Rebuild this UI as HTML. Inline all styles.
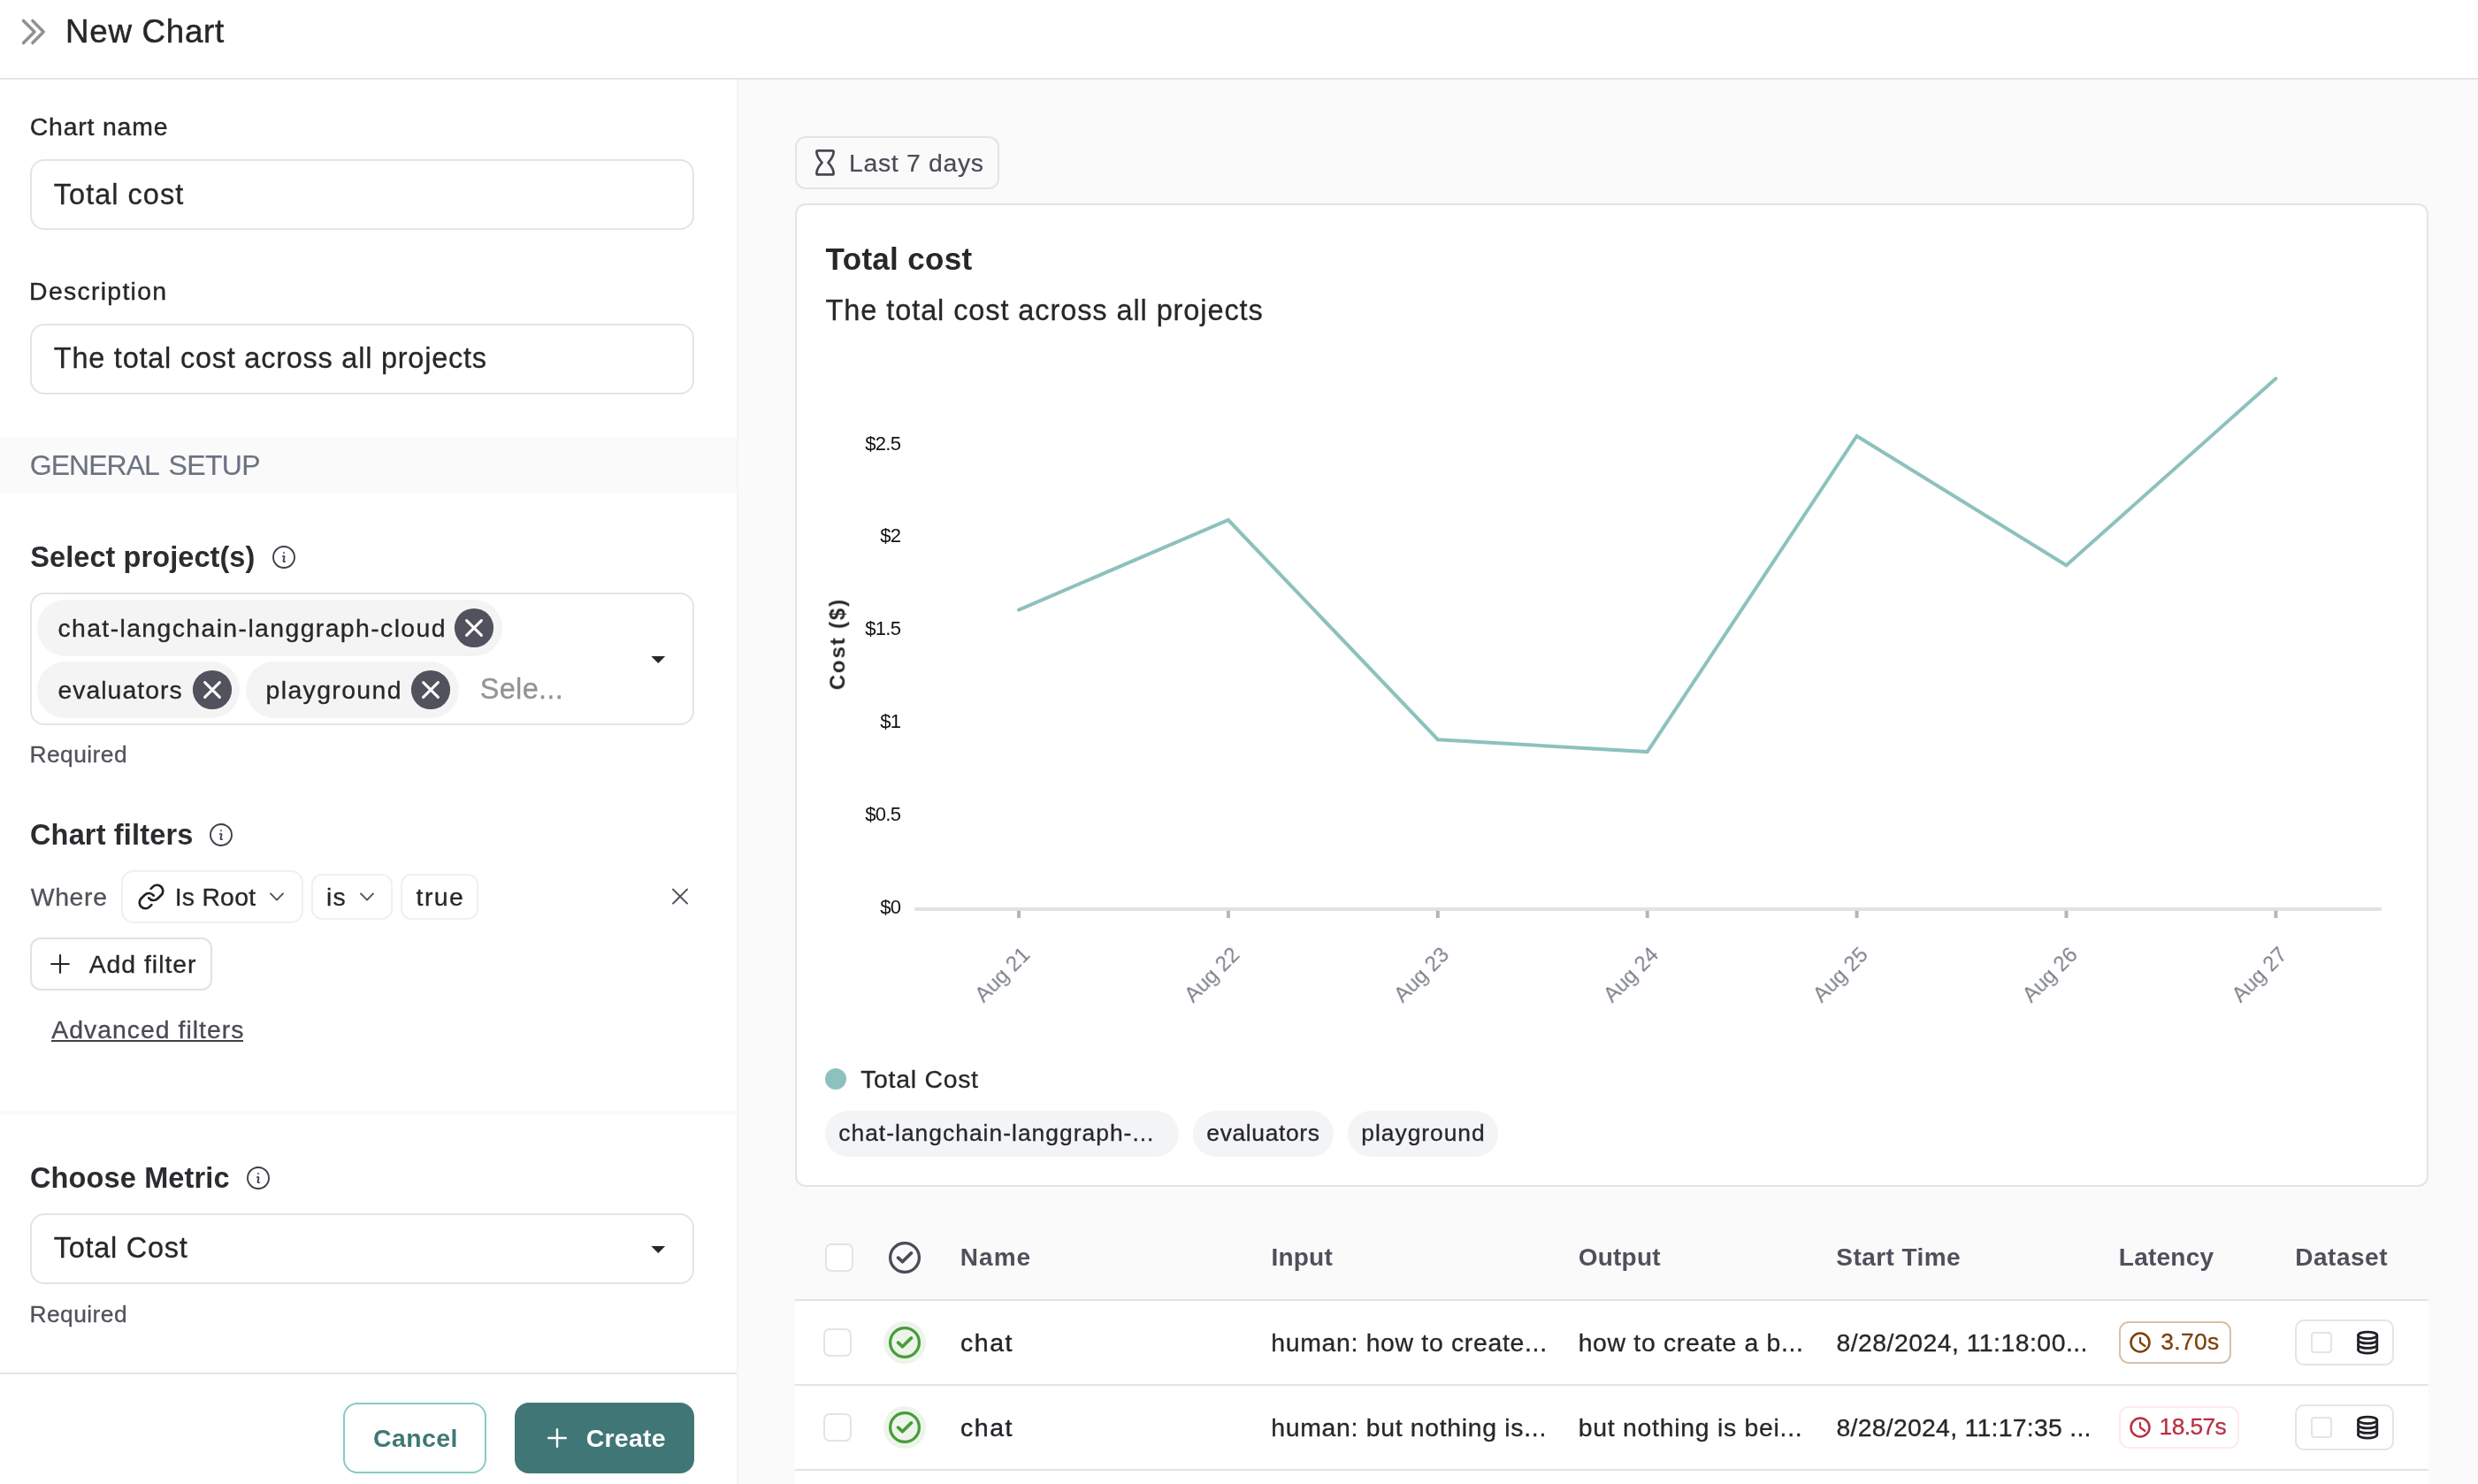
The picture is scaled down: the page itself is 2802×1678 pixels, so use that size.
<!DOCTYPE html>
<html><head><meta charset="utf-8"><title>New Chart</title>
<style>
html,body{margin:0;padding:0;background:#fff;}
body{width:2802px;height:1678px;position:relative;font-family:"Liberation Sans",sans-serif;}
.t{position:absolute;white-space:nowrap;line-height:1;font-weight:400;}
.b{position:absolute;box-sizing:border-box;}
#root{position:absolute;left:0;top:0;width:2802px;height:1678px;overflow:hidden;will-change:transform;}
</style></head><body><div id="root">
<div class="b" style="left:0px;top:88px;width:2802px;height:2px;background:#e4e4e7;"></div>
<div class="b" style="left:835px;top:90px;width:1967px;height:1588px;background:#fafafa;"></div>
<div class="b" style="left:833px;top:90px;width:2px;height:1588px;background:#f4f4f5;"></div>
<svg class="b" style="left:20px;top:16px;" width="40" height="40" viewBox="0 0 40 40" fill="none"><path d="M6.5 7.45 L19 20 L6.5 32.55 M16.9 7.45 L29.2 20 L16.9 32.55" stroke="#919195" stroke-width="3.5" stroke-linecap="round" stroke-linejoin="round"/></svg>
<span class="t" style="left:74.10px;top:17.93px;font-size:36.7px;color:#27272a;letter-spacing:0.717px;-webkit-text-stroke:0.5px #27272a;">New Chart</span>
<span class="t" style="left:33.76px;top:129.06px;font-size:28.4px;color:#27272a;letter-spacing:0.819px;-webkit-text-stroke:0.4px #27272a;">Chart name</span>
<div class="b" style="left:34px;top:180px;width:751px;height:80px;background:#fff;border:2px solid #e4e4e7;border-radius:16px;"></div>
<span class="t" style="left:60.81px;top:203.89px;font-size:32.5px;color:#27272a;letter-spacing:1.014px;-webkit-text-stroke:0.3px #27272a;">Total cost</span>
<span class="t" style="left:33.09px;top:314.86px;font-size:28.4px;color:#27272a;letter-spacing:1.299px;-webkit-text-stroke:0.4px #27272a;">Description</span>
<div class="b" style="left:34px;top:366px;width:751px;height:80px;background:#fff;border:2px solid #e4e4e7;border-radius:16px;"></div>
<span class="t" style="left:60.81px;top:389.49px;font-size:32.5px;color:#27272a;letter-spacing:0.759px;-webkit-text-stroke:0.3px #27272a;">The total cost across all projects</span>
<div class="b" style="left:0px;top:494px;width:833px;height:64px;background:#fafafa;"></div>
<span class="t" style="left:33.74px;top:510.01px;font-size:32.0px;color:#6b7280;letter-spacing:-0.969px;-webkit-text-stroke:0.15px #6b7280;">GENERAL</span>
<span class="t" style="left:190.46px;top:510.01px;font-size:32.0px;color:#6b7280;letter-spacing:-0.606px;-webkit-text-stroke:0.15px #6b7280;">SETUP</span>
<span class="t" style="left:34.26px;top:613.99px;font-size:32.5px;color:#2c2c30;font-weight:700;letter-spacing:0.077px;">Select project(s)</span>
<svg class="b" style="left:305px;top:614px;" width="32" height="32" viewBox="0 0 32 32" fill="none"><g transform="scale(1.3333)" stroke="#3f3f4a" stroke-width="1.4" stroke-linecap="round" stroke-linejoin="round"><path d="M11.25 11.25l.041-.02a.75.75 0 011.063.852l-.708 2.836a.75.75 0 001.063.853l.041-.021M21 12a9 9 0 11-18 0 9 9 0 0118 0zm-9-3.75h.008v.008H12V8.25z"/></g></svg>
<div class="b" style="left:34px;top:670px;width:751px;height:150px;background:#fff;border:2px solid #e4e4e7;border-radius:16px;"></div>
<div class="b" style="left:41.6px;top:677.8px;width:526.0px;height:64.0px;background:#f4f4f5;border-radius:32.0px;"></div>
<span class="t" style="left:65.41px;top:695.96px;font-size:28.4px;color:#27272a;letter-spacing:1.391px;-webkit-text-stroke:0.3px #27272a;">chat-langchain-langgraph-cloud</span>
<svg class="b" style="left:513px;top:686.8px;" width="46" height="46" viewBox="0 0 46 46" fill="none"><circle cx="23" cy="23" r="22.1" fill="#52525e"/><path d="M14.6 14.6 L31.4 31.4 M31.4 14.6 L14.6 31.4" stroke="#fff" stroke-width="3" stroke-linecap="round"/></svg>
<div class="b" style="left:41.6px;top:748.2px;width:229.79999999999998px;height:64.0px;background:#f4f4f5;border-radius:32.0px;"></div>
<span class="t" style="left:65.41px;top:765.76px;font-size:28.4px;color:#27272a;letter-spacing:1.028px;-webkit-text-stroke:0.3px #27272a;">evaluators</span>
<svg class="b" style="left:216.6px;top:757.2px;" width="46" height="46" viewBox="0 0 46 46" fill="none"><circle cx="23" cy="23" r="22.1" fill="#52525e"/><path d="M14.6 14.6 L31.4 31.4 M31.4 14.6 L14.6 31.4" stroke="#fff" stroke-width="3" stroke-linecap="round"/></svg>
<div class="b" style="left:278.4px;top:748.2px;width:240.60000000000002px;height:64.0px;background:#f4f4f5;border-radius:32.0px;"></div>
<span class="t" style="left:300.59px;top:765.76px;font-size:28.4px;color:#27272a;letter-spacing:1.376px;-webkit-text-stroke:0.3px #27272a;">playground</span>
<svg class="b" style="left:464px;top:757.2px;" width="46" height="46" viewBox="0 0 46 46" fill="none"><circle cx="23" cy="23" r="22.1" fill="#52525e"/><path d="M14.6 14.6 L31.4 31.4 M31.4 14.6 L14.6 31.4" stroke="#fff" stroke-width="3" stroke-linecap="round"/></svg>
<span class="t" style="left:542.76px;top:763.29px;font-size:32.5px;color:#929297;letter-spacing:0.308px;-webkit-text-stroke:0.3px #929297;">Sele...</span>
<svg class="b" style="left:734px;top:740px;" width="20" height="12" viewBox="0 0 20 12" fill="none"><path d="M2.3 2 H18.2 L10.25 10 Z" fill="#27272a"/></svg>
<span class="t" style="left:33.48px;top:840.25px;font-size:26.4px;color:#52525b;letter-spacing:0.436px;-webkit-text-stroke:0.3px #52525b;">Required</span>
<span class="t" style="left:33.99px;top:927.79px;font-size:32.5px;color:#2c2c30;font-weight:700;letter-spacing:0.162px;">Chart filters</span>
<svg class="b" style="left:234px;top:928.2px;" width="32" height="32" viewBox="0 0 32 32" fill="none"><g transform="scale(1.3333)" stroke="#3f3f4a" stroke-width="1.4" stroke-linecap="round" stroke-linejoin="round"><path d="M11.25 11.25l.041-.02a.75.75 0 011.063.852l-.708 2.836a.75.75 0 001.063.853l.041-.021M21 12a9 9 0 11-18 0 9 9 0 0118 0zm-9-3.75h.008v.008H12V8.25z"/></g></svg>
<span class="t" style="left:34.67px;top:999.96px;font-size:28.4px;color:#52525b;letter-spacing:0.688px;-webkit-text-stroke:0.3px #52525b;">Where</span>
<div class="b" style="left:137px;top:984px;width:206px;height:59.5px;background:#fff;border:2px solid #f0f0f2;border-radius:14px;"></div>
<svg class="b" style="left:154.9px;top:997.7px;" width="32" height="32" viewBox="0 0 32 32" fill="none"><g transform="scale(1.3333)" stroke="#202027" stroke-width="2" stroke-linecap="round" stroke-linejoin="round"><path d="M10 13a5 5 0 0 0 7.54.54l3-3a5 5 0 0 0-7.07-7.07l-1.72 1.71"/><path d="M14 11a5 5 0 0 0-7.54-.54l-3 3a5 5 0 0 0 7.07 7.07l1.71-1.71"/></g></svg>
<span class="t" style="left:197.74px;top:999.96px;font-size:28.4px;color:#27272a;letter-spacing:0.229px;-webkit-text-stroke:0.3px #27272a;">Is Root</span>
<svg class="b" style="left:301px;top:1002px;" width="24" height="24" viewBox="0 0 24 24" fill="none"><path d="M5 8.4 L12 15.6 L19 8.4" stroke="#52525b" stroke-width="1.9" stroke-linecap="round" stroke-linejoin="round"/></svg>
<div class="b" style="left:351.6px;top:988px;width:92.4px;height:51.5px;background:#fff;border:2px solid #f0f0f2;border-radius:12px;"></div>
<span class="t" style="left:368.93px;top:999.96px;font-size:28.4px;color:#27272a;letter-spacing:1.375px;-webkit-text-stroke:0.3px #27272a;">is</span>
<svg class="b" style="left:403px;top:1002px;" width="24" height="24" viewBox="0 0 24 24" fill="none"><path d="M5 8.4 L12 15.6 L19 8.4" stroke="#52525b" stroke-width="1.9" stroke-linecap="round" stroke-linejoin="round"/></svg>
<div class="b" style="left:453.4px;top:988px;width:88px;height:51.5px;background:#fff;border:2px solid #f0f0f2;border-radius:12px;"></div>
<span class="t" style="left:470.62px;top:999.96px;font-size:28.4px;color:#27272a;letter-spacing:1.396px;-webkit-text-stroke:0.3px #27272a;">true</span>
<svg class="b" style="left:757px;top:1001.4px;" width="24" height="24" viewBox="0 0 24 24" fill="none"><path d="M4 4.6 L20 20.6 M20 4.6 L4 20.6" stroke="#50505c" stroke-width="2" stroke-linecap="round"/></svg>
<div class="b" style="left:34px;top:1060px;width:206px;height:60px;background:#fff;border:2px solid #e2e2e6;border-radius:12px;"></div>
<svg class="b" style="left:55.8px;top:1077.6px;" width="24" height="24" viewBox="0 0 24 24" fill="none"><path d="M12 2.2 V21.8 M2.2 12 H21.8" stroke="#27272a" stroke-width="2.2" stroke-linecap="round"/></svg>
<span class="t" style="left:100.70px;top:1075.96px;font-size:28.4px;color:#27272a;letter-spacing:0.978px;-webkit-text-stroke:0.3px #27272a;">Add filter</span>
<span class="t" style="left:58.30px;top:1149.66px;font-size:28.4px;color:#4a4a56;letter-spacing:1.008px;-webkit-text-stroke:0.3px #4a4a56;">Advanced filters</span>
<div class="b" style="left:58.3px;top:1176.3px;width:216.5px;height:2px;background:#3f3f4a;"></div>
<div class="b" style="left:0px;top:1256px;width:833px;height:4px;background:#fafafa;"></div>
<span class="t" style="left:33.99px;top:1316.09px;font-size:32.5px;color:#2c2c30;font-weight:700;letter-spacing:0.134px;">Choose Metric</span>
<svg class="b" style="left:275.6px;top:1316px;" width="32" height="32" viewBox="0 0 32 32" fill="none"><g transform="scale(1.3333)" stroke="#3f3f4a" stroke-width="1.4" stroke-linecap="round" stroke-linejoin="round"><path d="M11.25 11.25l.041-.02a.75.75 0 011.063.852l-.708 2.836a.75.75 0 001.063.853l.041-.021M21 12a9 9 0 11-18 0 9 9 0 0118 0zm-9-3.75h.008v.008H12V8.25z"/></g></svg>
<div class="b" style="left:34px;top:1372px;width:751px;height:80px;background:#fff;border:2px solid #e4e4e7;border-radius:16px;"></div>
<span class="t" style="left:60.71px;top:1395.49px;font-size:32.5px;color:#27272a;letter-spacing:0.742px;-webkit-text-stroke:0.3px #27272a;">Total Cost</span>
<svg class="b" style="left:734px;top:1407px;" width="20" height="12" viewBox="0 0 20 12" fill="none"><path d="M2.3 2 H18.2 L10.25 10 Z" fill="#27272a"/></svg>
<span class="t" style="left:33.48px;top:1472.85px;font-size:26.4px;color:#52525b;letter-spacing:0.436px;-webkit-text-stroke:0.3px #52525b;">Required</span>
<div class="b" style="left:0px;top:1552px;width:833px;height:2px;background:#e4e4e7;"></div>
<div class="b" style="left:388px;top:1586px;width:162px;height:80px;background:#fff;border:2px solid #86cbc3;border-radius:16px;"></div>
<span class="t" style="left:422.07px;top:1611.76px;font-size:28.4px;color:#3f7876;font-weight:700;letter-spacing:0.432px;">Cancel</span>
<div class="b" style="left:582px;top:1586px;width:203px;height:80px;background:#407776;border-radius:16px;"></div>
<svg class="b" style="left:617.8px;top:1614px;" width="24" height="24" viewBox="0 0 24 24" fill="none"><path d="M12 2.2 V21.8 M2.2 12 H21.8" stroke="#fff" stroke-width="2.4" stroke-linecap="round"/></svg>
<span class="t" style="left:662.77px;top:1611.76px;font-size:28.4px;color:#ffffff;font-weight:700;letter-spacing:0.270px;">Create</span>
<div class="b" style="left:899px;top:154px;width:231px;height:60px;background:#fafafa;border:2px solid #e4e4e7;border-radius:12px;"></div>
<svg class="b" style="left:918px;top:166px;" width="30" height="36" viewBox="0 0 30 36" fill="none"><path d="M6.9 4.3 H23.1 Q24.6 4.3 24.6 5.8 C24.6 11 21.5 14.5 18.5 17.9 C21.5 21.3 24.6 24.8 24.6 29.9 Q24.6 31.4 23.1 31.4 H6.9 Q5.4 31.4 5.4 29.9 C5.4 24.8 8.5 21.3 11.5 17.9 C8.5 14.5 5.4 11 5.4 5.8 Q5.4 4.3 6.9 4.3 Z" stroke="#484853" stroke-width="2.75" stroke-linejoin="round"/></svg>
<span class="t" style="left:960.09px;top:169.76px;font-size:28.4px;color:#4b4b58;letter-spacing:0.669px;-webkit-text-stroke:0.2px #4b4b58;">Last 7 days</span>
<div class="b" style="left:899px;top:230px;width:1847px;height:1112px;background:#fff;border:2px solid #e4e4e7;border-radius:12px;"></div>
<span class="t" style="left:933.62px;top:275.17px;font-size:35.0px;color:#27272a;font-weight:700;letter-spacing:0.307px;">Total cost</span>
<span class="t" style="left:933.61px;top:335.49px;font-size:32.5px;color:#27272a;letter-spacing:0.908px;-webkit-text-stroke:0.3px #27272a;">The total cost across all projects</span>
<svg class="b" style="left:0;top:0;font-family:'Liberation Sans',sans-serif" width="2802" height="1678" viewBox="0 0 2802 1678"><rect x="1034" y="1026" width="1659" height="4" fill="#e2e2e6"/><rect x="1150.0" y="1029.8" width="4" height="8.2" fill="#b1b6c0"/><rect x="1386.9" y="1029.8" width="4" height="8.2" fill="#b1b6c0"/><rect x="1623.8" y="1029.8" width="4" height="8.2" fill="#b1b6c0"/><rect x="1860.7" y="1029.8" width="4" height="8.2" fill="#b1b6c0"/><rect x="2097.6" y="1029.8" width="4" height="8.2" fill="#b1b6c0"/><rect x="2334.5" y="1029.8" width="4" height="8.2" fill="#b1b6c0"/><rect x="2571.4" y="1029.8" width="4" height="8.2" fill="#b1b6c0"/><polyline points="1152.0,689.6 1388.9,588.0 1625.8,836.2 1862.7,850.1 2099.6,493.0 2336.5,639.3 2573.4,428" fill="none" stroke="#8dc1bd" stroke-width="4" stroke-linejoin="miter" stroke-linecap="round"/><text x="1018.3" y="508.6" text-anchor="end" font-size="22" letter-spacing="-0.7" fill="#111">$2.5</text><text x="1018.3" y="613.4" text-anchor="end" font-size="22" letter-spacing="-0.7" fill="#111">$2</text><text x="1018.3" y="718.1" text-anchor="end" font-size="22" letter-spacing="-0.7" fill="#111">$1.5</text><text x="1018.3" y="823.1" text-anchor="end" font-size="22" letter-spacing="-0.7" fill="#111">$1</text><text x="1018.3" y="928.1" text-anchor="end" font-size="22" letter-spacing="-0.7" fill="#111">$0.5</text><text x="1018.3" y="1033.1" text-anchor="end" font-size="22" letter-spacing="-0.7" fill="#111">$0</text><text transform="translate(955.2,728.2) rotate(-90)" text-anchor="middle" font-size="24" font-weight="700" letter-spacing="1.85" fill="#27272a">Cost ($)</text><text transform="translate(1166.0,1081) rotate(-45)" text-anchor="end" font-size="24" fill="#7b7f8a">Aug 21</text><text transform="translate(1402.9,1081) rotate(-45)" text-anchor="end" font-size="24" fill="#7b7f8a">Aug 22</text><text transform="translate(1639.8,1081) rotate(-45)" text-anchor="end" font-size="24" fill="#7b7f8a">Aug 23</text><text transform="translate(1876.7,1081) rotate(-45)" text-anchor="end" font-size="24" fill="#7b7f8a">Aug 24</text><text transform="translate(2113.6,1081) rotate(-45)" text-anchor="end" font-size="24" fill="#7b7f8a">Aug 25</text><text transform="translate(2350.5,1081) rotate(-45)" text-anchor="end" font-size="24" fill="#7b7f8a">Aug 26</text><text transform="translate(2587.4,1081) rotate(-45)" text-anchor="end" font-size="24" fill="#7b7f8a">Aug 27</text></svg>
<div class="b" style="left:932.6px;top:1207.8px;width:24.4px;height:24.4px;background:#8dc1bd;border-radius:13px;"></div>
<span class="t" style="left:973.17px;top:1205.76px;font-size:28.4px;color:#27272a;letter-spacing:0.736px;-webkit-text-stroke:0.3px #27272a;">Total Cost</span>
<div class="b" style="left:932.6px;top:1256px;width:400.69999999999993px;height:52px;background:#f3f4f6;border-radius:26px;"></div>
<span class="t" style="left:948.24px;top:1268.15px;font-size:26.4px;color:#27272a;letter-spacing:1.022px;-webkit-text-stroke:0.3px #27272a;">chat-langchain-langgraph-...</span>
<div class="b" style="left:1349px;top:1256px;width:158.79999999999995px;height:52px;background:#f3f4f6;border-radius:26px;"></div>
<span class="t" style="left:1364.34px;top:1268.15px;font-size:26.4px;color:#27272a;letter-spacing:0.657px;-webkit-text-stroke:0.3px #27272a;">evaluators</span>
<div class="b" style="left:1524.2px;top:1256px;width:169.5999999999999px;height:52px;background:#f3f4f6;border-radius:26px;"></div>
<span class="t" style="left:1539.31px;top:1268.15px;font-size:26.4px;color:#27272a;letter-spacing:0.979px;-webkit-text-stroke:0.3px #27272a;">playground</span>
<div class="b" style="left:899px;top:1471px;width:1847px;height:207px;background:#fff;"></div>
<div class="b" style="left:899px;top:1469px;width:1847px;height:2px;background:#e4e4e7;"></div>
<div class="b" style="left:899px;top:1565px;width:1847px;height:2px;background:#e4e4e7;"></div>
<div class="b" style="left:899px;top:1661px;width:1847px;height:2px;background:#e4e4e7;"></div>
<div class="b" style="left:933px;top:1406px;width:32px;height:32px;background:#fff;border:2px solid #e4e4e7;border-radius:7px;"></div>
<svg class="b" style="left:999px;top:1398px;" width="48" height="48" viewBox="0 0 48 48" fill="none"><circle cx="24" cy="24" r="16.4" stroke="#4b4b58" stroke-width="3.3"/><path d="M16.6 24.1 L21.4 28.7 L31.4 18.9" stroke="#4b4b58" stroke-width="3.7" stroke-linecap="round" stroke-linejoin="round"/></svg>
<span class="t" style="left:1085.79px;top:1408.20px;font-size:28.0px;color:#50505c;font-weight:700;letter-spacing:1.033px;">Name</span>
<span class="t" style="left:1437.39px;top:1408.20px;font-size:28.0px;color:#50505c;font-weight:700;letter-spacing:0.238px;">Input</span>
<span class="t" style="left:1784.78px;top:1408.20px;font-size:28.0px;color:#50505c;font-weight:700;letter-spacing:0.217px;">Output</span>
<span class="t" style="left:2076.35px;top:1408.20px;font-size:28.0px;color:#50505c;font-weight:700;letter-spacing:0.417px;">Start Time</span>
<span class="t" style="left:2395.79px;top:1408.20px;font-size:28.0px;color:#50505c;font-weight:700;letter-spacing:0.254px;">Latency</span>
<span class="t" style="left:2595.19px;top:1408.20px;font-size:28.0px;color:#50505c;font-weight:700;letter-spacing:0.533px;">Dataset</span>
<div class="b" style="left:931.3px;top:1502px;width:31.5px;height:31.5px;background:#fff;border:2px solid #e4e4e7;border-radius:7px;"></div>
<svg class="b" style="left:999px;top:1494px;" width="48" height="48" viewBox="0 0 48 48" fill="none"><circle cx="24" cy="24" r="24" fill="#edf5eb"/><circle cx="24" cy="24" r="16.4" stroke="#4a9c3b" stroke-width="3.3"/><path d="M16.6 24.1 L21.4 28.7 L31.4 18.9" stroke="#4a9c3b" stroke-width="3.7" stroke-linecap="round" stroke-linejoin="round"/></svg>
<span class="t" style="left:1086.11px;top:1503.76px;font-size:28.4px;color:#232329;letter-spacing:1.550px;-webkit-text-stroke:0.4px #232329;">chat</span>
<span class="t" style="left:1437.26px;top:1503.96px;font-size:28.4px;color:#27272a;letter-spacing:0.686px;-webkit-text-stroke:0.3px #27272a;">human: how to create...</span>
<span class="t" style="left:1784.66px;top:1503.96px;font-size:28.4px;color:#27272a;letter-spacing:0.678px;-webkit-text-stroke:0.3px #27272a;">how to create a b...</span>
<span class="t" style="left:2076.41px;top:1503.96px;font-size:28.4px;color:#27272a;letter-spacing:0.474px;-webkit-text-stroke:0.3px #27272a;">8/28/2024, 11:18:00...</span>
<div class="b" style="left:2396px;top:1494px;width:126.80000000000018px;height:47.5px;background:#fff;border:2px solid #d8c1aa;border-radius:11px;"></div>
<svg class="b" style="left:2407px;top:1504.8px;" width="26" height="26" viewBox="0 0 26 26" fill="none"><circle cx="13" cy="13" r="10.5" stroke="#7c4008" stroke-width="2.5"/><path d="M13 7.9 V13 L18.4 17" stroke="#7c4008" stroke-width="2.2" stroke-linecap="round" stroke-linejoin="round"/></svg>
<span class="t" style="left:2443.30px;top:1504.35px;font-size:26.4px;color:#7c4008;letter-spacing:0.334px;-webkit-text-stroke:0.3px #7c4008;">3.70s</span>
<div class="b" style="left:2595.3px;top:1492px;width:111.3px;height:52px;background:#fff;border:2px solid #e4e4e7;border-radius:10px;"></div>
<div class="b" style="left:2613.2px;top:1506px;width:23.6px;height:23.6px;background:#fff;border:2px solid #e4e4e7;border-radius:4px;"></div>
<svg class="b" style="left:2663.8px;top:1503.8px;" width="27" height="30" viewBox="0 0 27 30" fill="none"><g stroke="#202027" stroke-width="2.75" stroke-linecap="round"><ellipse cx="13.2" cy="5.8" rx="10.6" ry="3.75"/><path d="M2.6 5.8 V22.3 M23.8 5.8 V22.3"/><path d="M2.6 11.2 A10.6 3.75 0 0 0 23.8 11.2"/><path d="M2.6 16.7 A10.6 3.75 0 0 0 23.8 16.7"/><path d="M2.6 22.3 A10.6 3.75 0 0 0 23.8 22.3"/></g></svg>
<div class="b" style="left:931.3px;top:1598px;width:31.5px;height:31.5px;background:#fff;border:2px solid #e4e4e7;border-radius:7px;"></div>
<svg class="b" style="left:999px;top:1590px;" width="48" height="48" viewBox="0 0 48 48" fill="none"><circle cx="24" cy="24" r="24" fill="#edf5eb"/><circle cx="24" cy="24" r="16.4" stroke="#4a9c3b" stroke-width="3.3"/><path d="M16.6 24.1 L21.4 28.7 L31.4 18.9" stroke="#4a9c3b" stroke-width="3.7" stroke-linecap="round" stroke-linejoin="round"/></svg>
<span class="t" style="left:1086.11px;top:1599.76px;font-size:28.4px;color:#232329;letter-spacing:1.550px;-webkit-text-stroke:0.4px #232329;">chat</span>
<span class="t" style="left:1437.26px;top:1599.96px;font-size:28.4px;color:#27272a;letter-spacing:0.691px;-webkit-text-stroke:0.3px #27272a;">human: but nothing is...</span>
<span class="t" style="left:1784.79px;top:1599.96px;font-size:28.4px;color:#27272a;letter-spacing:0.729px;-webkit-text-stroke:0.3px #27272a;">but nothing is bei...</span>
<span class="t" style="left:2076.41px;top:1599.96px;font-size:28.4px;color:#27272a;letter-spacing:0.272px;-webkit-text-stroke:0.3px #27272a;">8/28/2024, 11:17:35 ...</span>
<div class="b" style="left:2396px;top:1590px;width:136.19999999999982px;height:47.5px;background:#fff;border:2px solid #fdeaed;border-radius:11px;"></div>
<svg class="b" style="left:2407px;top:1600.8px;" width="26" height="26" viewBox="0 0 26 26" fill="none"><circle cx="13" cy="13" r="10.5" stroke="#ba3040" stroke-width="2.5"/><path d="M13 7.9 V13 L18.4 17" stroke="#ba3040" stroke-width="2.2" stroke-linecap="round" stroke-linejoin="round"/></svg>
<span class="t" style="left:2441.60px;top:1600.35px;font-size:26.4px;color:#ba3040;letter-spacing:-0.630px;-webkit-text-stroke:0.3px #ba3040;">18.57s</span>
<div class="b" style="left:2595.3px;top:1588px;width:111.3px;height:52px;background:#fff;border:2px solid #e4e4e7;border-radius:10px;"></div>
<div class="b" style="left:2613.2px;top:1602px;width:23.6px;height:23.6px;background:#fff;border:2px solid #e4e4e7;border-radius:4px;"></div>
<svg class="b" style="left:2663.8px;top:1599.8px;" width="27" height="30" viewBox="0 0 27 30" fill="none"><g stroke="#202027" stroke-width="2.75" stroke-linecap="round"><ellipse cx="13.2" cy="5.8" rx="10.6" ry="3.75"/><path d="M2.6 5.8 V22.3 M23.8 5.8 V22.3"/><path d="M2.6 11.2 A10.6 3.75 0 0 0 23.8 11.2"/><path d="M2.6 16.7 A10.6 3.75 0 0 0 23.8 16.7"/><path d="M2.6 22.3 A10.6 3.75 0 0 0 23.8 22.3"/></g></svg>
</div></body></html>
